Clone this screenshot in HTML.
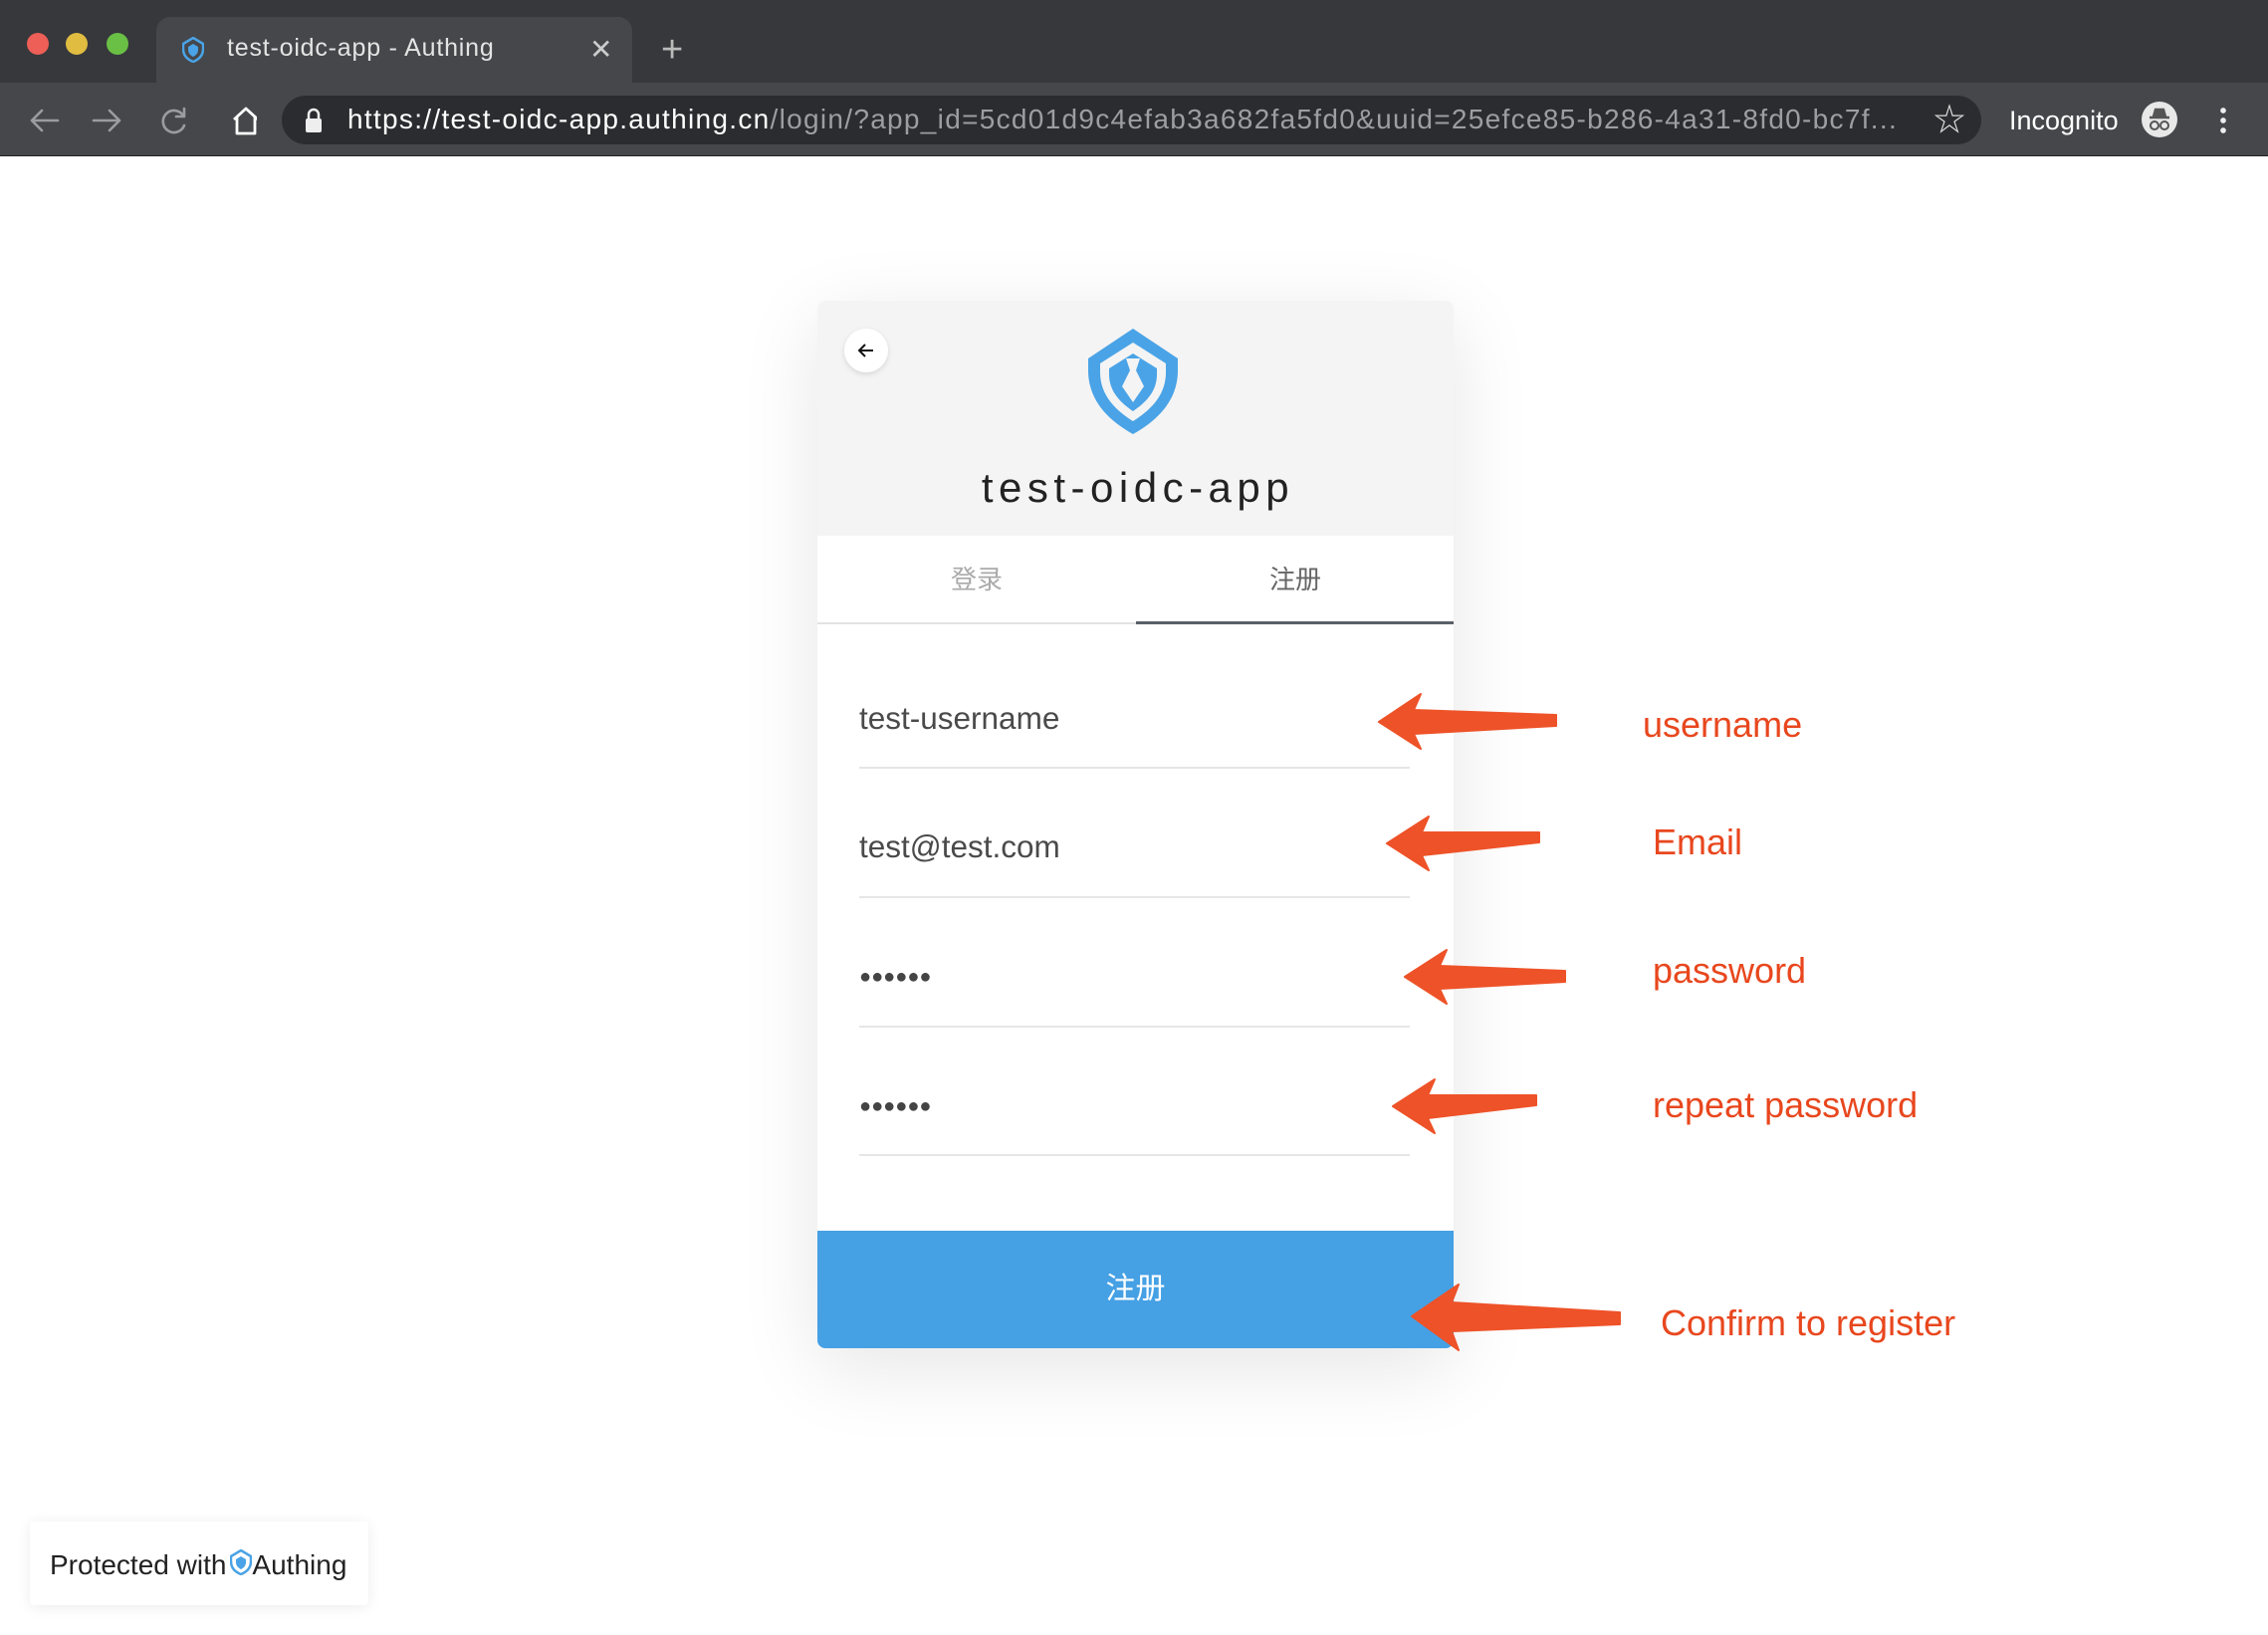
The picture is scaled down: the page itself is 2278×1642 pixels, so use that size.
<!DOCTYPE html>
<html><head><meta charset="utf-8"><style>
*{margin:0;padding:0;box-sizing:border-box}
html,body{width:2278px;height:1642px;overflow:hidden;background:#fff;font-family:"Liberation Sans","Noto Sans CJK SC",sans-serif}
.abs{position:absolute}
#frame{left:0;top:0;width:2278px;height:83px;background:#36383c}
#tab{left:157px;top:17px;width:478px;height:66px;background:#45474b;border-radius:14px 14px 0 0}
#toolbar{left:0;top:83px;width:2278px;height:74px;background:#45474b;border-bottom:1px solid #222}
#url{left:283px;top:96px;width:1707px;height:49px;background:#2a2c2f;border-radius:25px}
.dot{width:22px;height:22px;border-radius:50%;top:33px}
.card{left:821px;top:302px;width:639px;height:1052px;border-radius:8px;box-shadow:0 20px 80px rgba(0,0,0,0.10);background:#fff}
.hdr{left:821px;top:302px;width:639px;height:236px;background:#f4f4f4;border-radius:8px 8px 0 0}
.line{left:863px;width:553px;height:2px;background:#e6e6e6}
.itxt{left:863px;font-size:31.5px;color:#4a4a4a;line-height:40px}
.dots{font-size:20px;letter-spacing:0px;color:#444}
.lbl{font-size:36px;color:#e8471e;line-height:44px}
</style></head><body>
<div id="frame" class="abs"></div>
<div class="abs dot" style="left:27px;background:#ee5f57"></div>
<div class="abs dot" style="left:66px;background:#e0bc41"></div>
<div class="abs dot" style="left:107px;background:#6abf45"></div>
<div id="tab" class="abs"></div>
<svg class="abs" style="left:183px;top:37px" width="22" height="26" viewBox="0 0 22 26"><path d="M11 1 L21 7 V12 C21 19 16 23 11 25 C6 23 1 19 1 12 V7 Z" fill="none" stroke="#4aa3e6" stroke-width="2.5"/><path d="M11 7 L16 10 V13 C16 17 13 19 11 20 C9 19 6 17 6 13 V10Z" fill="#4aa3e6"/></svg>
<div class="abs" style="left:228px;top:33px;font-size:25px;letter-spacing:0.8px;color:#e4e4e4;line-height:30px;white-space:nowrap">test-oidc-app - Authing</div>
<div class="abs" style="left:592px;top:33px;font-size:28px;color:#ccc;line-height:34px">✕</div>
<div class="abs" style="left:664px;top:29px;font-size:38px;color:#bbb;line-height:42px">+</div>
<div id="toolbar" class="abs"></div>
<svg class="abs" style="left:28px;top:104px" width="230" height="34" viewBox="0 0 230 34">
<g fill="none" stroke="#9a9c9f" stroke-width="2.6" stroke-linecap="round" stroke-linejoin="round">
<path d="M30 17 H4 M14 7 L4 17 L14 27"/>
<path d="M66 17 H92 M82 7 L92 17 L82 27"/>
<path d="M156 12 A11 11 0 1 0 157 22 M157 5 V13 H149"/>
</g>
<path d="M207 16 L219 5 L231 16 M210 14 V30 H228 V14" fill="none" stroke="#fff" stroke-width="2.8" stroke-linejoin="round"/>
</svg>
<div id="url" class="abs"></div>
<svg class="abs" style="left:305px;top:108px" width="20" height="26" viewBox="0 0 20 26"><rect x="2" y="11" width="16" height="14" rx="2" fill="#eee"/><path d="M5 11 V7 A5 5 0 0 1 15 7 V11" fill="none" stroke="#eee" stroke-width="2.5"/></svg>
<div class="abs" style="left:349px;top:103px;font-size:28px;letter-spacing:1.3px;line-height:34px;color:#9c9ea1;white-space:nowrap"><span style="color:#fff">https://test-oidc-app.authing.cn</span>/login/?app_id=5cd01d9c4efab3a682fa5fd0&amp;uuid=25efce85-b286-4a31-8fd0-bc7f...</div>
<div class="abs" style="left:1942px;top:100px;font-size:32px;color:#ddd;line-height:40px">☆</div>
<div class="abs" style="left:2018px;top:104px;font-size:27px;color:#fff;line-height:34px">Incognito</div>
<div class="abs" style="left:2151px;top:102px;width:36px;height:36px;border-radius:50%;background:#e8e8e8"></div>
<svg class="abs" style="left:2151px;top:102px" width="36" height="36" viewBox="0 0 36 36"><path d="M8 16 H28 M12 15 L14 8 H22 L24 15" stroke="#555" stroke-width="2.4" fill="#555"/><circle cx="13" cy="24" r="4" fill="none" stroke="#555" stroke-width="2"/><circle cx="23" cy="24" r="4" fill="none" stroke="#555" stroke-width="2"/></svg>
<div class="abs" style="left:2230px;top:106px;width:6px;height:30px;background:radial-gradient(circle,#eee 2.6px,transparent 3px) 0 0/6px 10px"></div>

<div class="abs card"></div>
<div class="abs hdr"></div>
<div class="abs" style="left:848px;top:330px;width:44px;height:44px;border-radius:50%;background:#fff;box-shadow:0 2px 6px rgba(0,0,0,.12)"></div>
<svg class="abs" style="left:858px;top:340px" width="24" height="24" viewBox="0 0 24 24"><path d="M19 12 H5 M11 6 L5 12 L11 18" fill="none" stroke="#111" stroke-width="2"/></svg>
<svg class="abs" style="left:1093px;top:330px" width="90" height="106" viewBox="0 0 90 106">
<path d="M45 0 L90 30 V42 C90 72 70 92 45 106 C20 92 0 72 0 42 V30 Z" fill="#4aa3e6"/>
<path d="M45 14 L78 35 V44 C78 66 64 81 45 93 C26 81 12 66 12 44 V35 Z" fill="#f4f4f4"/>
<path d="M45 25 L69 40 V46 C69 63 58 74 45 83 C32 74 21 63 21 46 V40 Z" fill="#4aa3e6"/>
<path d="M38 30 H52 L48 42 L56 58 L45 74 L34 58 L42 42 Z" fill="#f4f4f4"/>
</svg>
<div class="abs" style="left:821px;top:465px;width:639px;text-align:center;font-size:42px;letter-spacing:5.5px;color:#222;line-height:50px;padding-left:5px">test-oidc-app</div>
<div class="abs" style="left:821px;top:564px;width:320px;text-align:center;font-size:26px;color:#aaa;line-height:36px">登录</div>
<div class="abs" style="left:1141px;top:564px;width:320px;text-align:center;font-size:26px;color:#666;line-height:36px">注册</div>
<div class="abs" style="left:821px;top:625px;width:320px;height:2px;background:#e3e3e3"></div>
<div class="abs" style="left:1141px;top:624px;width:319px;height:3px;background:#5a6068"></div>

<div class="abs itxt" style="top:701px">test-username</div>
<div class="abs line" style="top:770px"></div>
<div class="abs itxt" style="top:830px">test@test.com</div>
<div class="abs line" style="top:900px"></div>
<div class="abs itxt dots" style="top:961px">●●●●●●</div>
<div class="abs line" style="top:1030px"></div>
<div class="abs itxt dots" style="top:1091px">●●●●●●</div>
<div class="abs line" style="top:1159px"></div>
<div class="abs" style="left:821px;top:1236px;width:639px;height:118px;background:#45a0e4;border-radius:0 0 8px 8px;color:#fff;font-size:30px;text-align:center;line-height:118px">注册</div>

<svg class="abs" style="left:0;top:0" width="2278" height="1642">
<g fill="#ee5228" stroke="#ee5228" stroke-width="2" stroke-linejoin="round">
<polygon points="1385,725 1427,697 1420,713 1563,718 1563,729 1420,737 1427,752"/>
<polygon points="1393,847 1435,820 1428,836 1546,836 1546,846 1428,859 1435,874"/>
<polygon points="1411,981 1453,954 1446,970 1572,975 1572,986 1446,993 1453,1008"/>
<polygon points="1399,1111 1441,1084 1434,1100 1543,1100 1543,1110 1434,1123 1441,1138"/>
<polygon points="1418,1322 1465,1290 1458,1308 1627,1318 1627,1330 1458,1337 1465,1356"/>
</g></svg>
<div class="abs lbl" style="left:1650px;top:706px">username</div>
<div class="abs lbl" style="left:1660px;top:824px">Email</div>
<div class="abs lbl" style="left:1660px;top:953px">password</div>
<div class="abs lbl" style="left:1660px;top:1088px">repeat password</div>
<div class="abs lbl" style="left:1668px;top:1307px">Confirm to register</div>

<div class="abs" style="left:30px;top:1528px;width:340px;height:84px;background:#fff;border-radius:4px;box-shadow:0 2px 14px rgba(0,0,0,.08)"></div>
<div class="abs" style="left:50px;top:1555px;font-size:28px;color:#222;line-height:34px;white-space:nowrap">Protected with<span style="display:inline-block;width:26px"></span>Authing</div>
<svg class="abs" style="left:231px;top:1556px" width="22" height="26" viewBox="0 0 22 26"><path d="M11 1 L21 7 V12 C21 19 16 23 11 25 C6 23 1 19 1 12 V7 Z" fill="none" stroke="#4aa3e6" stroke-width="2.5"/><path d="M11 7 L16 10 V13 C16 17 13 19 11 20 C9 19 6 17 6 13 V10Z" fill="#4aa3e6"/></svg>
</body></html>
